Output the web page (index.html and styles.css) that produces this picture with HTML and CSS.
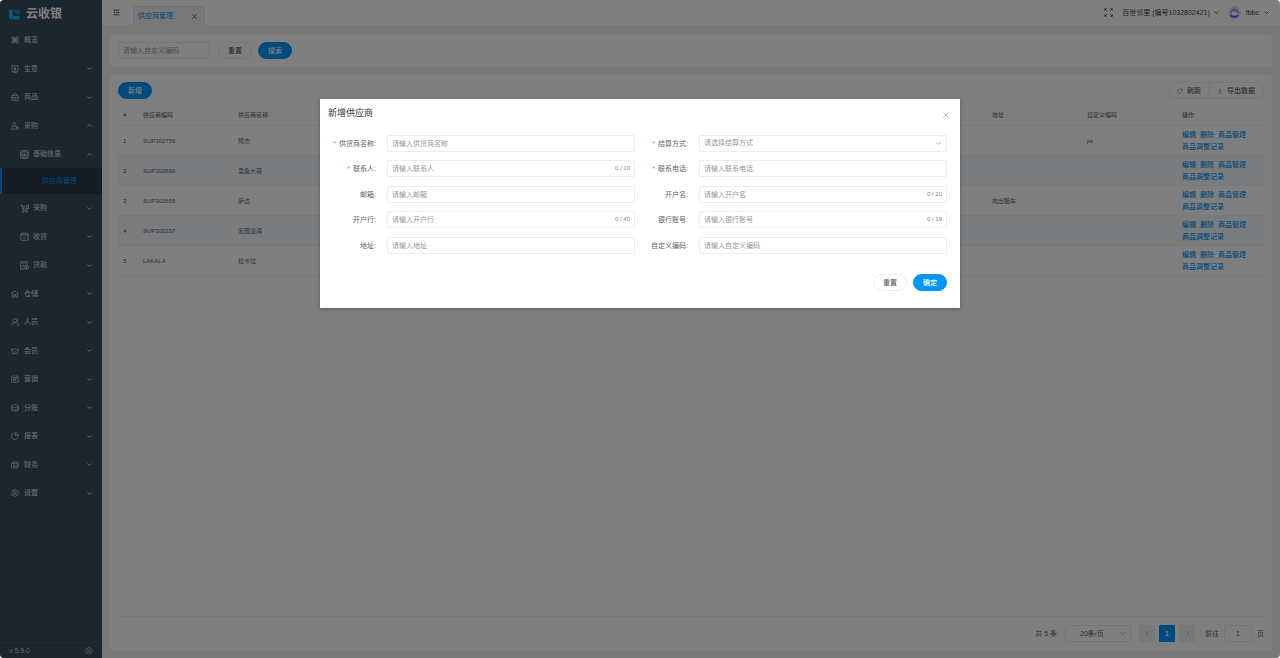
FILE: index.html
```html
<!DOCTYPE html>
<html lang="zh-CN">
<head>
<meta charset="utf-8">
<meta name="viewport" content="width=device-width, initial-scale=1">
<title>供应商管理</title>
<link rel="stylesheet" href="styles.css">
</head>
<body>
<svg class="sprite" aria-hidden="true">
  <symbol id="down" viewBox="0 0 12 12"><path d="M1 3.500l5 5 5-5"/></symbol>
  <symbol id="up" viewBox="0 0 12 12"><path d="M1 8.500l5-5 5 5"/></symbol>
  <symbol id="left" viewBox="0 0 12 12"><path d="M8.500 1l-5 5 5 5"/></symbol>
  <symbol id="right" viewBox="0 0 12 12"><path d="M3.500 1l5 5-5 5"/></symbol>
  <symbol id="close" viewBox="0 0 12 12"><path d="M1 1l10 10M11 1L1 11"/></symbol>
  <symbol id="fold" viewBox="0 0 24 24"><path stroke-width="3" d="M2 4h20M10 12h12M2 20h20"/><path fill="currentColor" stroke="none" d="M7 8v8l-5-4z"/></symbol>
  <symbol id="full" viewBox="0 0 24 24"><path d="M2 7V2h5M2 2l6 6M17 2h5v5M22 2l-6 6M2 17v5h5M2 22l6-6M22 17v5h-5M22 22l-6-6"/></symbol>
  <symbol id="refresh" viewBox="0 0 24 24"><path d="M20 15a9 9 0 1 1 0-6M21 2v7h-7"/></symbol>
  <symbol id="download" viewBox="0 0 24 24"><path d="M12 2v14M6 10l6 6 6-6M3 21h18"/></symbol>
  <symbol id="overview" viewBox="0 0 24 24"><circle cx="6" cy="6" r="4"/><circle cx="18" cy="6" r="4"/><circle cx="6" cy="18" r="4"/><circle cx="18" cy="18" r="4"/><path d="M10 6v12M14 6v12M6 10h12M6 14h12"/></symbol>
  <symbol id="trade" viewBox="0 0 24 24"><path d="M3 2h18v17H3zM6 22h12M8 5l4 5 4-5M8 10h8M8 14h8M12 10v7"/></symbol>
  <symbol id="goods" viewBox="0 0 24 24"><path d="M2 8h20v14H2zM7 8V5a3 3 0 0 1 3-3h4a3 3 0 0 1 3 3v3M2 14h20M8 18h8"/></symbol>
  <symbol id="buyer" viewBox="0 0 24 24"><circle cx="10" cy="6" r="4.500"/><path d="M12 22H2v-3q0-7 8-7 3 0 5 1.500M15 16h7v6h-7zM16.500 16v-2h4v2"/></symbol>
  <symbol id="basic" viewBox="0 0 24 24"><rect x="1" y="1" width="22" height="22" rx="6"/><rect x="5" y="5" width="14" height="14" rx="2"/><path d="M9 16v-4M12 16V9M15 16v-5"/></symbol>
  <symbol id="cart" viewBox="0 0 24 24"><path d="M1 3h4l3 13h10M6 6h10M7 11h8M18 3h5v10h-5zM18 13v3"/><circle cx="9" cy="20" r="2"/><circle cx="18" cy="20" r="2"/></symbol>
  <symbol id="receive" viewBox="0 0 24 24"><rect x="2" y="3" width="20" height="19" rx="3"/><path d="M2 8h20M8 14l3 3 6-5"/></symbol>
  <symbol id="loan" viewBox="0 0 24 24"><path d="M11 22H2V2h17v8M6 7h9M6 12h5M6 17h3"/><circle cx="17" cy="17" r="5.500"/><path d="M15 14l2 2 2-2M17 16v4M15 18h4"/></symbol>
  <symbol id="store" viewBox="0 0 24 24"><path d="M1 11l11-8 11 8M4 9v13h5v-8h6v8h5V9M12 14v8"/></symbol>
  <symbol id="people" viewBox="0 0 24 24"><circle cx="11" cy="8" r="5.500"/><path d="M2 22q0-8 9-8 4 0 6 3M16 2q6 2 4 8-1 2-3 2.500M19 14q4 3 4 8h-4"/></symbol>
  <symbol id="crown" viewBox="0 0 24 24"><path d="M2 5l5 4 5-5 5 5 5-4-2 15H4zM8 15h8"/></symbol>
  <symbol id="market" viewBox="0 0 24 24"><path d="M22 10v9a3 3 0 0 1-3 3H5a3 3 0 0 1-3-3V6a3 3 0 0 1 3-3h8M6 17l14-12M15 3h6v6"/><circle cx="11" cy="12" r="5"/></symbol>
  <symbol id="stack" viewBox="0 0 24 24"><path d="M2 6c0-5 20-5 20 0v12c0 5-20 5-20 0zM2 7c0 5 20 5 20 0M2 13c0 5 20 5 20 0"/></symbol>
  <symbol id="report" viewBox="0 0 24 24"><path d="M9 3a10 10 0 1 0 12 12M13 1v10h9A10 10 0 0 0 13 1z"/></symbol>
  <symbol id="finance" viewBox="0 0 24 24"><path d="M1 7h17v14H1zM5 7V3h18v14h-5M6 11l3.500 3 3.500-3M9.500 14v4M6 15h7"/></symbol>
  <symbol id="gear" viewBox="0 0 24 24"><path d="M9 2h6l1 3h4l3 6-2 3 1 2-3 4-4 0-3 3-3-3-4 0-3-4 1-2-2-3 3-6h4z"/><circle cx="12" cy="12" r="4"/></symbol>
</svg>

<div class="app">
  <aside class="sidebar">
    <div class="brand">
      <svg class="brand-logo" viewBox="0 0 24 24" aria-hidden="true"><path fill="#0ab4e0" d="M0 1h8v14h15v8H4a4 4 0 0 1-4-4z"/><path fill="#0a90c8" d="M12 1h11v11h-6V7h-5z"/></svg>
      <span>云收银</span>
    </div>
    <nav>
      <ul class="menu">
        <li><button class="menu-item"><svg class="icon"><use href="#overview"/></svg><span>概览</span></button></li>
        <li><button class="menu-item"><svg class="icon"><use href="#trade"/></svg><span>生意</span><svg class="chev"><use href="#down"/></svg></button></li>
        <li><button class="menu-item"><svg class="icon"><use href="#goods"/></svg><span>商品</span><svg class="chev"><use href="#down"/></svg></button></li>
        <li><button class="menu-item"><svg class="icon"><use href="#buyer"/></svg><span>采购</span><svg class="chev"><use href="#up"/></svg></button></li>
        <li><button class="menu-item sub"><svg class="icon"><use href="#basic"/></svg><span>基础信息</span><svg class="chev"><use href="#up"/></svg></button></li>
        <li class="current"><a class="menu-link" href="#" aria-current="page">供应商管理</a></li>
        <li><button class="menu-item sub"><svg class="icon"><use href="#cart"/></svg><span>采购</span><svg class="chev"><use href="#down"/></svg></button></li>
        <li><button class="menu-item sub"><svg class="icon"><use href="#receive"/></svg><span>收货</span><svg class="chev"><use href="#down"/></svg></button></li>
        <li><button class="menu-item sub"><svg class="icon"><use href="#loan"/></svg><span>货款</span><svg class="chev"><use href="#down"/></svg></button></li>
        <li><button class="menu-item"><svg class="icon"><use href="#store"/></svg><span>仓储</span><svg class="chev"><use href="#down"/></svg></button></li>
        <li><button class="menu-item"><svg class="icon"><use href="#people"/></svg><span>人员</span><svg class="chev"><use href="#down"/></svg></button></li>
        <li><button class="menu-item"><svg class="icon"><use href="#crown"/></svg><span>会员</span><svg class="chev"><use href="#down"/></svg></button></li>
        <li><button class="menu-item"><svg class="icon"><use href="#market"/></svg><span>营销</span><svg class="chev"><use href="#down"/></svg></button></li>
        <li><button class="menu-item"><svg class="icon"><use href="#stack"/></svg><span>分账</span><svg class="chev"><use href="#down"/></svg></button></li>
        <li><button class="menu-item"><svg class="icon"><use href="#report"/></svg><span>报表</span><svg class="chev"><use href="#down"/></svg></button></li>
        <li><button class="menu-item"><svg class="icon"><use href="#finance"/></svg><span>财务</span><svg class="chev"><use href="#down"/></svg></button></li>
        <li><button class="menu-item"><svg class="icon"><use href="#gear"/></svg><span>设置</span><svg class="chev"><use href="#down"/></svg></button></li>
      </ul>
    </nav>
    <div class="side-foot"><span>v 5.9.0</span><button class="plain" aria-label="系统设置"><svg class="icon"><use href="#gear"/></svg></button></div>
  </aside>

  <div class="main">
    <header class="topbar">
      <button class="plain fold" aria-label="收起菜单"><svg class="fold-icon"><use href="#fold"/></svg></button>
      <div class="tab"><a href="#">供应商管理</a><button class="plain" aria-label="关闭标签"><svg class="cross"><use href="#close"/></svg></button></div>
      <div class="top-right">
        <button class="plain" aria-label="全屏"><svg class="icon full"><use href="#full"/></svg></button>
        <button class="plain shop">百世邻里 (编号1032802421)<svg class="chev"><use href="#down"/></svg></button>
        <button class="plain user">
          <svg class="avatar" viewBox="0 0 26 26" aria-hidden="true"><circle cx="13" cy="13" r="13" fill="#d3e0ff"/><path d="M5 15q0-10 8-10t8 10z" fill="#8fa4e8"/><path d="M8 12q5-3 10 0v4q-5 5-10 0z" fill="#fff"/><path d="M4 18q4-1 6 1 3 2 6 0 2-2 6-1-3 6-9 6t-9-6z" fill="#4a62ff"/></svg>
          fbbc<svg class="chev"><use href="#down"/></svg></button>
      </div>
    </header>

    <main class="content">
      <form class="card search">
        <input class="field" type="text" placeholder="请输入自定义编码" aria-label="自定义编码">
        <div class="search-actions">
          <button class="btn" type="button">重置</button>
          <button class="btn primary" type="button">搜索</button>
        </div>
      </form>

      <section class="card list">
        <div class="toolbar">
          <button class="btn primary">新增</button>
          <div class="group">
            <button><svg class="tool"><use href="#refresh"/></svg>刷新</button>
            <button><svg class="tool"><use href="#download"/></svg>导出数据</button>
          </div>
        </div>
        <table class="grid">
          <colgroup><col class="c-index"><col class="c-data"><col class="c-data"><col><col class="c-data"><col class="c-data"><col class="c-ops"></colgroup>
          <thead><tr><th>#</th><th>供应商编码</th><th>供应商名称</th><th></th><th>地址</th><th>自定义编码</th><th>操作</th></tr></thead>
          <tbody>
            <tr><td>1</td><td>SUP302759</td><td>阿杰</td><td></td><td></td><td>jie</td><td><div class="ops"><a href="#">编辑</a><a href="#">删除</a><a href="#">商品管理</a><a href="#">商品调整记录</a></div></td></tr>
            <tr><td>2</td><td>SUP302666</td><td>卖鱼大哥</td><td></td><td></td><td></td><td><div class="ops"><a href="#">编辑</a><a href="#">删除</a><a href="#">商品管理</a><a href="#">商品调整记录</a></div></td></tr>
            <tr><td>3</td><td>SUP302658</td><td>萨达</td><td></td><td>向出租车</td><td></td><td><div class="ops"><a href="#">编辑</a><a href="#">删除</a><a href="#">商品管理</a><a href="#">商品调整记录</a></div></td></tr>
            <tr><td>4</td><td>SUP302157</td><td>无限澎湃</td><td></td><td></td><td></td><td><div class="ops"><a href="#">编辑</a><a href="#">删除</a><a href="#">商品管理</a><a href="#">商品调整记录</a></div></td></tr>
            <tr><td>5</td><td>LAKALA</td><td>拉卡拉</td><td></td><td></td><td></td><td><div class="ops"><a href="#">编辑</a><a href="#">删除</a><a href="#">商品管理</a><a href="#">商品调整记录</a></div></td></tr>
          </tbody>
        </table>
        <div class="pager">
          <span>共 5 条</span>
          <div class="select size"><select class="field" aria-label="每页条数"><option>20条/页</option></select><svg class="chev"><use href="#down"/></svg></div>
          <div class="pages">
            <button class="page" aria-label="上一页" disabled><svg class="chev"><use href="#left"/></svg></button>
            <button class="page on">1</button>
            <button class="page" aria-label="下一页" disabled><svg class="chev"><use href="#right"/></svg></button>
          </div>
          <label class="jump">前往<input class="field" type="text" value="1">页</label>
        </div>
      </section>
    </main>
  </div>

  <div class="overlay">
    <div class="dialog" role="dialog" aria-modal="true" aria-labelledby="dialog-title">
      <div class="dialog-head"><h2 id="dialog-title">新增供应商</h2><button class="plain" aria-label="关闭"><svg class="cross"><use href="#close"/></svg></button></div>
      <form class="dialog-form">
        <div class="form-grid">
          <div class="row"><label class="req" for="f1">供货商名称:</label><div class="control"><input class="field" id="f1" type="text" placeholder="请输入供货商名称"></div></div>
          <div class="row"><label class="req" for="f2">结算方式:</label><div class="control select"><select class="field empty" id="f2"><option>请选择结算方式</option></select><svg class="chev"><use href="#down"/></svg></div></div>
          <div class="row"><label class="req" for="f3">联系人:</label><div class="control"><input class="field" id="f3" type="text" maxlength="10" placeholder="请输入联系人"><span class="count">0 / 10</span></div></div>
          <div class="row"><label class="req" for="f4">联系电话:</label><div class="control"><input class="field" id="f4" type="text" placeholder="请输入联系电话"></div></div>
          <div class="row"><label for="f5">邮箱:</label><div class="control"><input class="field" id="f5" type="text" placeholder="请输入邮箱"></div></div>
          <div class="row"><label for="f6">开户名:</label><div class="control"><input class="field" id="f6" type="text" maxlength="20" placeholder="请输入开户名"><span class="count">0 / 20</span></div></div>
          <div class="row"><label for="f7">开户行:</label><div class="control"><input class="field" id="f7" type="text" maxlength="40" placeholder="请输入开户行"><span class="count">0 / 40</span></div></div>
          <div class="row"><label for="f8">银行账号:</label><div class="control"><input class="field" id="f8" type="text" maxlength="19" placeholder="请输入银行账号"><span class="count">0 / 19</span></div></div>
          <div class="row"><label for="f9">地址:</label><div class="control"><input class="field" id="f9" type="text" placeholder="请输入地址"></div></div>
          <div class="row"><label for="f10">自定义编码:</label><div class="control"><input class="field" id="f10" type="text" placeholder="请输入自定义编码"></div></div>
        </div>
        <div class="dialog-foot"><button class="btn" type="button">重置</button><button class="btn primary" type="button">确定</button></div>
      </form>
    </div>
  </div>
</div>
</body>
</html>
```
FILE: styles.css
```css
* { box-sizing: border-box; }

body {
  margin: 0;
  background: #fff;
  color: #606266;
  font-family: "Liberation Sans", "Noto Sans CJK SC", sans-serif;
  font-size: 7px;
  line-height: 12px;
}

button, input, select { font: inherit; color: inherit; margin: 0; }
button { cursor: pointer; }
a { color: #0096fa; text-decoration: none; }
svg { flex: none; fill: none; stroke: currentColor; stroke-width: 2; }

.sprite { position: absolute; width: 0; height: 0; }
.icon { width: 8px; height: 8px; }
.chev { width: 5px; height: 5px; stroke-width: 2; }
.cross { width: 6px; height: 6px; stroke-width: 1; }
.tool { width: 6px; height: 6px; }
.plain { display: flex; align-items: center; padding: 0; border: 0; background: none; }

.app {
  position: relative;
  display: flex;
  min-height: 100vh;
  border-radius: 4px;
  overflow: hidden;
}

/* sidebar */
.sidebar {
  display: flex;
  flex-direction: column;
  flex: none;
  width: 102px;
  background: #364c5e;
  color: #dfe3e7;
}
.brand {
  display: flex;
  align-items: center;
  gap: 6px;
  height: 26px;
  padding: 2px 0 0 9px;
  color: #fff;
  font-size: 12px;
  font-weight: bold;
}
.brand-logo { width: 11px; height: 11px; stroke: none; }
.menu { margin: 0; padding: 0; list-style: none; }
.menu li { height: 28px; }
.menu li:nth-child(even) { height: 29px; }
.menu li.current { height: 26px; border-left: 2px solid #0096fa; background: #2b3846; }
.menu-item {
  display: flex;
  align-items: center;
  gap: 5px;
  width: 100%;
  height: 100%;
  padding: 0 10px 0 11px;
  border: 0;
  background: none;
}
.menu-item .chev { margin-left: auto; }
.menu-item.sub { gap: 4px; padding-left: 20px; }
.menu-item.sub .icon { width: 9px; height: 9px; }
.menu-link { display: flex; align-items: center; height: 100%; padding-left: 40px; }
.side-foot {
  display: flex;
  align-items: center;
  justify-content: space-between;
  height: 16px;
  margin-top: auto;
  padding: 0 9px;
  border-top: 1px solid #40566a;
  color: #c0c8d0;
}

/* top bar */
.main { display: flex; flex: 1; flex-direction: column; min-width: 0; background: #f0f0f0; }
.topbar {
  display: flex;
  align-items: flex-end;
  height: 26px;
  padding: 0 11px;
  border-bottom: 1px solid #f0f0f0;
  background: #fff;
  color: #404246;
}
.fold { height: 25px; }
.fold-icon { width: 7px; height: 7px; }
.tab {
  display: flex;
  align-items: center;
  justify-content: space-between;
  width: 72px;
  height: 19px;
  margin-left: 13px;
  padding: 0 7px 0 4px;
  border: 1px solid #e6e6e6;
  border-bottom: 0;
  border-radius: 4px 4px 0 0;
  background: #f0f0f0;
}
.tab .cross { width: 5px; height: 5px; stroke-width: 2; }
.top-right { display: flex; align-items: center; height: 25px; margin-left: auto; gap: 9px; }
.full { width: 9px; height: 9px; }
.shop { gap: 4px; }
.user { gap: 5px; }
.avatar { width: 13px; height: 13px; stroke: none; }

/* cards */
.content { display: flex; flex: 1; flex-direction: column; gap: 8px; padding: 8px; }
.card { border-radius: 2px; background: #fff; padding: 8px; }
.search { display: flex; gap: 8px; height: 32px; align-items: center; }
.search .field { width: 92px; }
.search-actions { display: flex; gap: 6px; }
.list { display: flex; flex: 1; flex-direction: column; }

.field {
  display: block;
  height: 17px;
  padding: 0 4px;
  border: 1px solid #ebedf0;
  border-radius: 2px;
  background: #fff;
}
.field::placeholder { color: #94979e; opacity: 1; }
select.field { width: 100%; appearance: none; }
.select { position: relative; }
.select .chev { position: absolute; right: 6px; top: 6px; color: #a0a3aa; }

.btn {
  width: 34px;
  height: 17px;
  padding: 1px 0 0;
  border: 1px solid #ebedf0;
  border-radius: 9px;
  background: #fff;
  font-weight: 500;
}
.btn.primary { border-color: #0096fa; background: #0096fa; color: #fff; }

.toolbar { display: flex; justify-content: space-between; height: 23px; align-items: flex-start; }
.group { display: flex; height: 17px; border: 1px solid #ebedf0; border-radius: 9px; }
.group button {
  display: flex;
  align-items: center;
  gap: 4px;
  padding: 0 8px 0 7px;
  border: 0;
  background: none;
  font-weight: 500;
}
.group button + button { border-left: 1px solid #ebedf0; }

/* table */
.grid { width: 100%; table-layout: fixed; border-collapse: collapse; font-size: 6px; }
.c-index { width: 20px; }
.c-data { width: 95px; }
.c-ops { width: 87px; }
.grid th { height: 20px; padding: 0 5px; color: #70737a; font-weight: 500; text-align: left; }
.grid td { height: 30px; padding: 1px 5px 0; }
.grid tr { border-bottom: 1px solid #f0f2f6; }
.grid tbody tr:nth-child(even) { background: #f5f8fc; }
.ops { display: flex; flex-wrap: wrap; column-gap: 4px; font-size: 7px; font-weight: 500; }

/* pagination */
.pager {
  display: flex;
  align-items: center;
  justify-content: flex-end;
  gap: 8px;
  height: 26px;
  margin-top: auto;
  padding-top: 8px;
  border-top: 1px solid #f0f2f6;
}
.size { width: 66px; }
.size select { padding: 0 14px; }
.pages { display: flex; gap: 4px; }
.page {
  display: flex;
  align-items: center;
  justify-content: center;
  width: 16px;
  height: 17px;
  padding: 0;
  border: 0;
  border-radius: 1px;
  background: #f0f2f5;
  color: #a0a3aa;
}
.page.on { background: #0096fa; color: #fff; font-weight: bold; }
.jump { display: flex; align-items: center; gap: 5px; margin-left: 2px; }
.jump .field { width: 28px; text-align: center; }

/* dialog */
.overlay {
  position: absolute;
  inset: 0;
  display: flex;
  align-items: flex-start;
  justify-content: center;
  padding-top: 15vh;
  background: rgba(0, 0, 0, 0.5);
}
.dialog {
  width: 50%;
  padding: 8px 11px 17px 8px;
  background: #fff;
  box-shadow: 0 1px 4px rgba(0, 0, 0, 0.3);
}
.dialog-head { display: flex; justify-content: space-between; height: 24px; }
.dialog-head h2 { margin: 0; color: #303133; font-size: 9px; font-weight: normal; }
.dialog-head .plain { height: 16px; color: #808388; }
.dialog-form { padding-right: 2px; }
.form-grid {
  display: grid;
  grid-template-columns: 1fr 1fr;
  grid-auto-rows: 25px 26px;
  column-gap: 5px;
}
.row { display: flex; align-items: center; }
.row label {
  display: flex;
  flex: none;
  justify-content: flex-end;
  gap: 3px;
  width: 48px;
  margin-right: 11px;
  padding-top: 1px;
  white-space: nowrap;
}
.req::before { content: "*"; color: #f56c6c; }
.control { position: relative; flex: 1; }
.control .field { width: 100%; }
.empty { color: #94979e; }
.count { position: absolute; right: 5px; top: 2px; color: #808388; font-size: 6px; }
.dialog-foot { display: flex; justify-content: flex-end; gap: 6px; margin-top: 16px; }
```
